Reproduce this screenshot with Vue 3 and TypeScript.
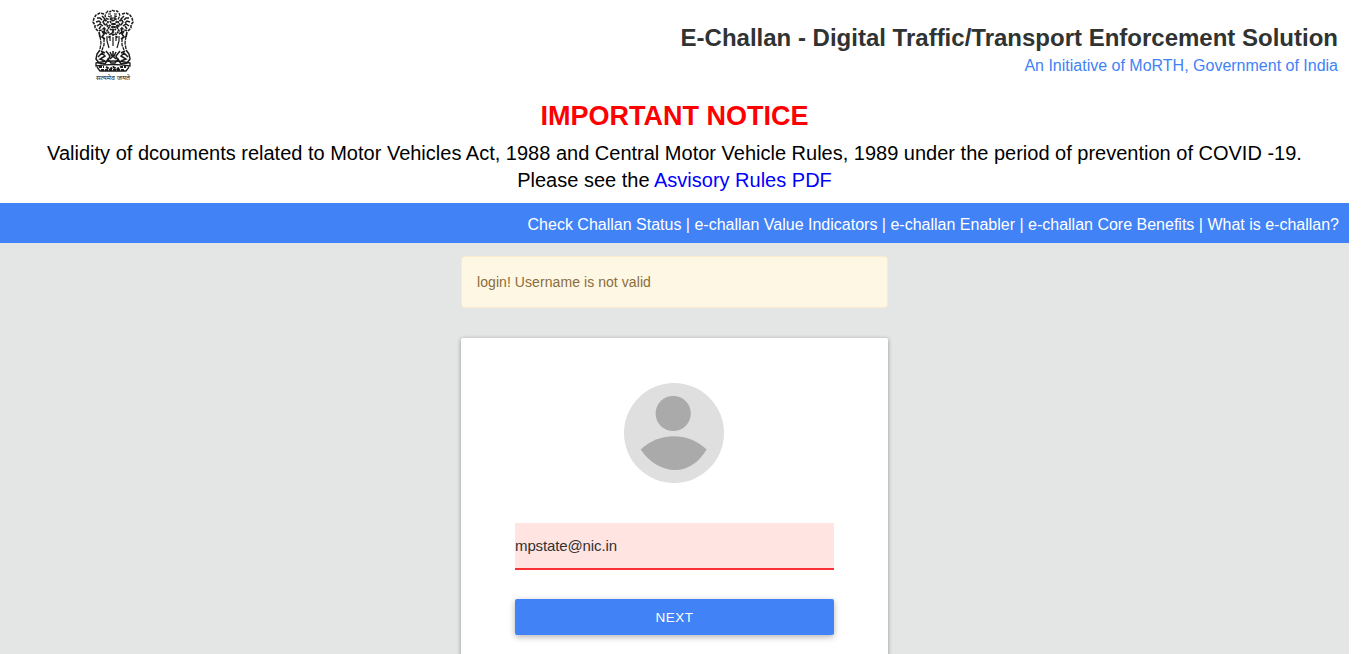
<script setup lang="ts">
import { ref } from 'vue'

const username = ref('mpstate@nic.in')
const links: string[] = [
  'Check Challan Status',
  'e-challan Value Indicators',
  'e-challan Enabler',
  'e-challan Core Benefits',
  'What is e-challan?',
]
</script>

<template>
  <div class="page">
    <header class="header">
      <svg class="emblem" viewBox="0 0 42 74" width="42" height="74" fill="none" stroke="#1c1c1c" stroke-width="1">
        <path d="M14 4 L16 2 L18 3 L20 1 L22 2 L25 2 L27 4 L28 7 L26 10 L15 10 L13 7 Z" stroke-width="1.3" stroke-dasharray="3 1" />
        <path d="M16 5h3m3 0h3M16 7l2 1m5 0 2-1M19 6v3h4v-3M18 10l3 2 3-2" stroke-width="1.2" />
        <path d="M12 5 L8 4 L4 6 L2 9 L1 13 L3 16 L3 19 L6 22 L10 21 L13 18 M30 5 L34 4 L38 6 L40 9 L41 13 L39 16 L39 19 L36 22 L32 21 L29 18" stroke-width="1.5" stroke-dasharray="3 1" />
        <path d="M5 9h3l2 2M4 13l3-1 2 2M5 17l3-2 3 2M7 20l2-3M37 9h-3l-2 2M38 13l-3-1-2 2M37 17l-3-2-3 2M35 20l-2-3M10 7l3 3-2 3 2 3M32 7l-3 3 2 3-2 3" stroke-width="1.5" />
        <path d="M13 11l3 2-2 3 3 2-2 4 3 3-1 4M29 11l-3 2 2 3-3 2 2 4-3 3 1 4M18 12l2 3h3l2-3M17 16l3 2h3l3-2M18 20l3 2 3-2M19 24l2 2 3-2M21 14v13" stroke-width="1.8" stroke-dasharray="2 .7" />
        <path d="M7 23l1 5M35 23l-1 5M10 22l2 3-2 3 3 2M32 22l-2 3 2 3-3 2M13 19l-1 4 3 2M29 19l1 4-3 2" stroke-width="1.7" />
        <path d="M8 27l1 7-1 6M34 27l-1 7 1 6M12 29v7l-2 5M30 29v7l2 5" stroke-width="1.3" stroke-dasharray="4 .7" />
        <path d="M15 27v5l2 7M18 27v5M21 28v9M24 27v5M27 27v5l-2 7" stroke-width="1.2" />
        <path d="M8 41l-3 4-1 5 3 4 6 1 3-5 3 4h4l3-4 3 5 6-1 3-4-1-5-3-4" stroke-width="1.5" />
        <path d="M6 48l4-4 3 3-5 3 5 2M36 48l-4-4-3 3 5 3-5 2M14 42l4 5-2 4M28 42l-4 5 2 4M21 42v5M18 50l3-3 3 3M9 42l4 2M33 42l-4 2M18 43l2 4M24 43l-2 4" stroke-width="1.5" />
        <path d="M4 54q17-4 34 0v3q-17-3-34 0zM5 58l3 4h26l3-4" stroke-width="1.3" />
        <path d="M7 58h5m2 0 4 2 3-2 4 2 4-2h5M9 61h24" stroke-width="2" stroke-dasharray="3 1" />
        <text x="21" y="71" text-anchor="middle" class="motto">सत्यमेव जयते</text>
      </svg>
      <div class="brand">
        <h1>E-Challan - Digital Traffic/Transport Enforcement Solution</h1>
        <p>An Initiative of MoRTH, Government of India</p>
      </div>
    </header>

    <section class="notice">
      <h2>IMPORTANT NOTICE</h2>
      <p>
        Validity of dcouments related to Motor Vehicles Act, 1988 and Central Motor Vehicle Rules, 1989 under the period of prevention of COVID -19.<br />
        Please see the <a href="#">Asvisory Rules PDF</a>
      </p>
    </section>

    <nav class="nav">
      <template v-for="(link, i) in links" :key="link"><span v-if="i > 0"> | </span><a href="#">{{ link }}</a></template>
    </nav>

    <main class="content">
      <div class="alert">login! Username is not valid</div>
      <form class="card" @submit.prevent>
        <svg class="avatar" viewBox="0 0 100 100" width="100" height="100">
          <circle cx="50" cy="50" r="50" fill="#dfdfdf" />
          <circle cx="49.2" cy="30.5" r="17.6" fill="#aaa" />
          <path d="M16.700 66.500C35 49 64 48.500 82.700 66.500C74 80 64 87 51 87C38 87 25 79 16.700 66.500Z" fill="#aaa" />
        </svg>
        <input v-model="username" type="text" aria-label="Username" />
        <button type="submit">NEXT</button>
      </form>
    </main>
  </div>
</template>

<style>
html,
body {
  margin: 0;
  height: 654px;
  overflow: hidden;
  background: #fff;
}
</style>

<style scoped>
.page {
  box-sizing: border-box;
  width: 1349px;
  height: 654px;
  overflow: hidden;
  display: flex;
  flex-direction: column;
  font-family: "Liberation Sans", Arial, sans-serif;
  color: #2f3332;
}
.header {
  height: 96px;
  flex: none;
  display: flex;
  justify-content: space-between;
  padding: 0 11px 0 92px;
  box-sizing: border-box;
}
.emblem {
  margin-top: 9px;
  overflow: visible;
}
.motto {
  font: 7px "Noto Sans", "Noto Sans Devanagari", sans-serif;
  fill: #222;
  stroke: none;
}
.brand {
  text-align: right;
  padding-top: 24px;
}
h1 {
  margin: 0;
  font-size: 24px;
  line-height: 28px;
  font-weight: 700;
  white-space: nowrap;
}
.brand p {
  margin: 4px 0 0;
  font-size: 16px;
  line-height: 20px;
  color: #4182f7;
}
.notice {
  height: 107px;
  flex: none;
  text-align: center;
  color: #000;
}
h2 {
  margin: 4px 0 7px;
  font-size: 27px;
  line-height: 33px;
  color: #f00;
}
.notice p {
  margin: 0;
  font-size: 20px;
  line-height: 27px;
  white-space: nowrap;
}
.notice a {
  color: #00f;
  text-decoration: none;
}
.nav {
  height: 40px;
  flex: none;
  box-sizing: border-box;
  padding: 2px 10px 0 0;
  background: #4182f7;
  color: #fff;
  font-size: 16px;
  line-height: 40px;
  text-align: right;
  white-space: pre;
}
.nav a {
  color: #fff;
  text-decoration: none;
}
.content {
  flex: 1;
  min-height: 0;
  background: #e4e6e5;
  display: flex;
  flex-direction: column;
  align-items: center;
  padding-top: 13px;
}
.alert {
  flex: none;
  box-sizing: border-box;
  width: 427px;
  height: 52px;
  padding: 15px;
  border: 1px solid #faebcc;
  border-radius: 4px;
  background: #fef7e4;
  color: #8a6d3b;
  font-size: 14px;
  line-height: 21px;
  letter-spacing: 0.07px;
}
.card {
  flex: none;
  box-sizing: border-box;
  width: 427px;
  height: 380px;
  margin-top: 30px;
  padding: 45px 54px 0;
  border-radius: 2px;
  background: #fff;
  box-shadow: 0 1px 4px rgba(0, 0, 0, 0.37);
  display: flex;
  flex-direction: column;
  align-items: center;
}
.avatar {
  flex: none;
  margin-right: 1px;
}
input {
  box-sizing: border-box;
  width: 319px;
  height: 47px;
  margin: 40px 0 29px;
  padding: 0;
  border: 0;
  border-bottom: 2px solid #f92f33;
  border-radius: 0;
  background: #ffe4e1;
  color: #2f3332;
  font: 15px "Liberation Sans", Arial, sans-serif;
  letter-spacing: -0.12px;
  outline: none;
}
button {
  width: 319px;
  height: 36px;
  padding: 0;
  border: 0;
  border-radius: 2px;
  background: #4182f7;
  color: #fff;
  font: 13.5px "Liberation Sans", Arial, sans-serif;
  letter-spacing: 0.5px;
  box-shadow: 0 2px 6px rgba(0, 0, 0, 0.3);
}
</style>
